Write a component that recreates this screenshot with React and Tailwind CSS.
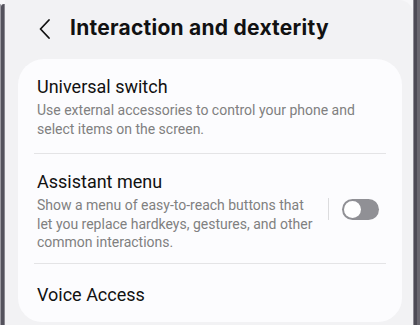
export default function App() {
  const font = { fontFamily: 'Roboto, "Noto Sans", sans-serif' };
  return (
    <div className="w-[420px] h-[325px] flex bg-[#f7f7f9] overflow-hidden" style={font}>
      <div className="w-[5px] h-full flex pt-[4px]">
        <div className="w-[1px] bg-[#9a98a0] rounded-tl-full" />
        <div className="w-[3px] bg-[#54525c] rounded-tl-full" />
        <div className="w-[1px] bg-[#8a8890]" />
      </div>
      <div className="flex-1 h-full bg-[#f2f2f4] rounded-tr-[14px] flex flex-col">
        <div className="h-[59px] flex items-start pt-[17px]">
          <svg width="14" height="22" viewBox="0 0 14 22" className="ml-[33px] mt-[1px]">
            <path d="M11 2 L2.5 11 L11 20" fill="none" stroke="#111" strokeWidth="1.8" strokeLinecap="round" strokeLinejoin="round" />
          </svg>
          <div className="ml-[18px] text-[21px] leading-[22px] font-bold text-[#111] font-['Inter'] tracking-[0.25px]">Interaction and dexterity</div>
        </div>
        <div className="ml-[13px] mr-[11px] flex-1 bg-[#fcfcfe] rounded-t-[26px] rounded-b-[24px] mb-[3px] px-[19px] flex flex-col">
          <div className="pt-[17px] pb-[15px] border-b border-[#e4e4e6] -mx-[3px] px-[3px]">
            <div className="text-[18px] leading-[22px] text-[#111]">Universal switch</div>
            <div className="text-[14px] leading-[18.5px] text-[#808080] mt-[3px] w-[335px]">Use external accessories to control your phone and select items on the screen.</div>
          </div>
          <div className="pt-[17px] pb-[11px] border-b border-[#e4e4e6] -mx-[3px] px-[3px] flex items-center">
            <div className="flex-1">
              <div className="text-[18px] leading-[22px] text-[#111]">Assistant menu</div>
              <div className="text-[14px] leading-[18.5px] text-[#808080] mt-[3px] w-[282px]">Show a menu of easy-to-reach buttons that let you replace hardkeys, gestures, and other common interactions.</div>
            </div>
            <div className="w-[1px] h-[22px] bg-[#dcdcde] mr-[13px] mb-[4px]" />
            <div className="w-[37px] h-[21px] rounded-full bg-[#909095] mr-[4px] mb-[4px] relative">
              <div className="absolute left-[2px] top-[2px] w-[17px] h-[17px] rounded-full bg-white" />
            </div>
          </div>
          <div className="pt-[20px]">
            <div className="text-[18px] leading-[22px] text-[#111]">Voice Access</div>
          </div>
        </div>
      </div>
      <div className="w-[7px] h-full flex">
        <div className="w-[1px] bg-[#8c8a92]" />
        <div className="w-[3px] bg-[#4e4c56]" />
        <div className="w-[3px] bg-[#6a6870]" />
      </div>
    </div>
  );
}
